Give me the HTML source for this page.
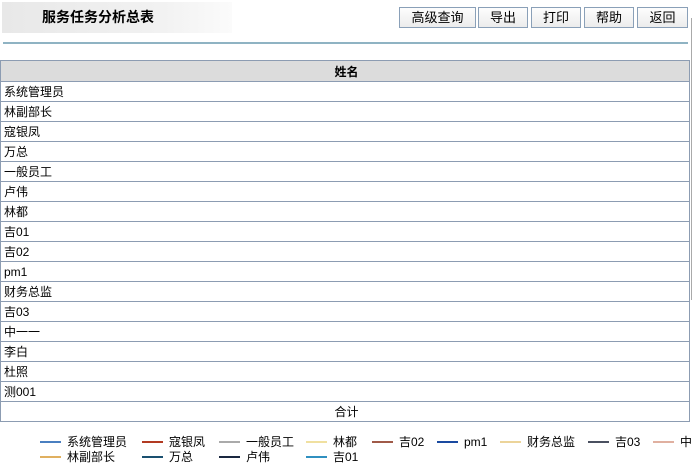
<!DOCTYPE html>
<html><head><meta charset="utf-8"><style>
body{margin:0;width:694px;height:465px;background:#fff;font-family:"Liberation Sans","Noto Sans CJK SC",sans-serif;font-size:12px;color:#000;position:relative;overflow:hidden}
.title{position:absolute;left:2px;top:2px;width:230px;height:31px;background:linear-gradient(90deg,#e8e8e8,#f2f2f2 70%,#fbfbfb);font-weight:bold;font-size:14px;line-height:31px;text-indent:40px}
.btn{position:absolute;top:7px;height:19px;border:1px solid #8aa0b8;background:linear-gradient(#fdfdfd,#ececec);text-align:center;line-height:19px;font-size:13px}
.hr{position:absolute;left:3px;top:42px;width:685px;height:2px;background:#8fb3c3}
.sb{position:absolute;left:691px;top:18px;width:1px;height:282px;background:#aaa}
table{position:absolute;left:0;top:60px;width:690px;border-collapse:collapse}
td,th{border:1px solid #8c9cb2;height:19px;padding:0 0 0 3px;font-size:12px;text-align:left}
th{background:#dcdcdc;text-align:center;font-weight:bold;height:20px}
td.c{text-align:center}
.lg{position:absolute;font-size:12px;line-height:14px}
.lg i{position:absolute;left:-27px;top:6px;width:21px;height:2px}
</style></head><body>
<div class="title">服务任务分析总表</div>
<div class="btn" style="left:399px;width:75px">高级查询</div>
<div class="btn" style="left:478px;width:48px">导出</div>
<div class="btn" style="left:531px;width:48px">打印</div>
<div class="btn" style="left:584px;width:48px">帮助</div>
<div class="btn" style="left:637px;width:49px">返回</div>
<div class="hr"></div>
<div class="sb"></div>
<table>
<tr><th>姓名</th></tr>
<tr><td>系统管理员</td></tr><tr><td>林副部长</td></tr><tr><td>寇银凤</td></tr><tr><td>万总</td></tr>
<tr><td>一般员工</td></tr><tr><td>卢伟</td></tr><tr><td>林都</td></tr><tr><td>吉01</td></tr>
<tr><td>吉02</td></tr><tr><td>pm1</td></tr><tr><td>财务总监</td></tr><tr><td>吉03</td></tr>
<tr><td>中一一</td></tr><tr><td>李白</td></tr><tr><td>杜照</td></tr><tr><td>测001</td></tr>
<tr><td class="c">合计</td></tr>
</table>
<div class="lg" style="left:67px;top:435px"><i style="background:#4a7fc0"></i>系统管理员</div>
<div class="lg" style="left:169px;top:435px"><i style="background:#b23a22"></i>寇银凤</div>
<div class="lg" style="left:246px;top:435px"><i style="background:#aaa"></i>一般员工</div>
<div class="lg" style="left:333px;top:435px"><i style="background:#f0e0a0"></i>林都</div>
<div class="lg" style="left:399px;top:435px"><i style="background:#a05a48"></i>吉02</div>
<div class="lg" style="left:464px;top:435px"><i style="background:#1a4aa0"></i>pm1</div>
<div class="lg" style="left:527px;top:435px"><i style="background:#ecd49a"></i>财务总监</div>
<div class="lg" style="left:615px;top:435px"><i style="background:#4a5060"></i>吉03</div>
<div class="lg" style="left:680px;top:435px"><i style="background:#e0b0a0"></i>中</div>
<div class="lg" style="left:67px;top:450px"><i style="background:#e0b060"></i>林副部长</div>
<div class="lg" style="left:169px;top:450px"><i style="background:#1a5070"></i>万总</div>
<div class="lg" style="left:246px;top:450px"><i style="background:#1a2840"></i>卢伟</div>
<div class="lg" style="left:333px;top:450px"><i style="background:#3090c0"></i>吉01</div>
</body></html>
